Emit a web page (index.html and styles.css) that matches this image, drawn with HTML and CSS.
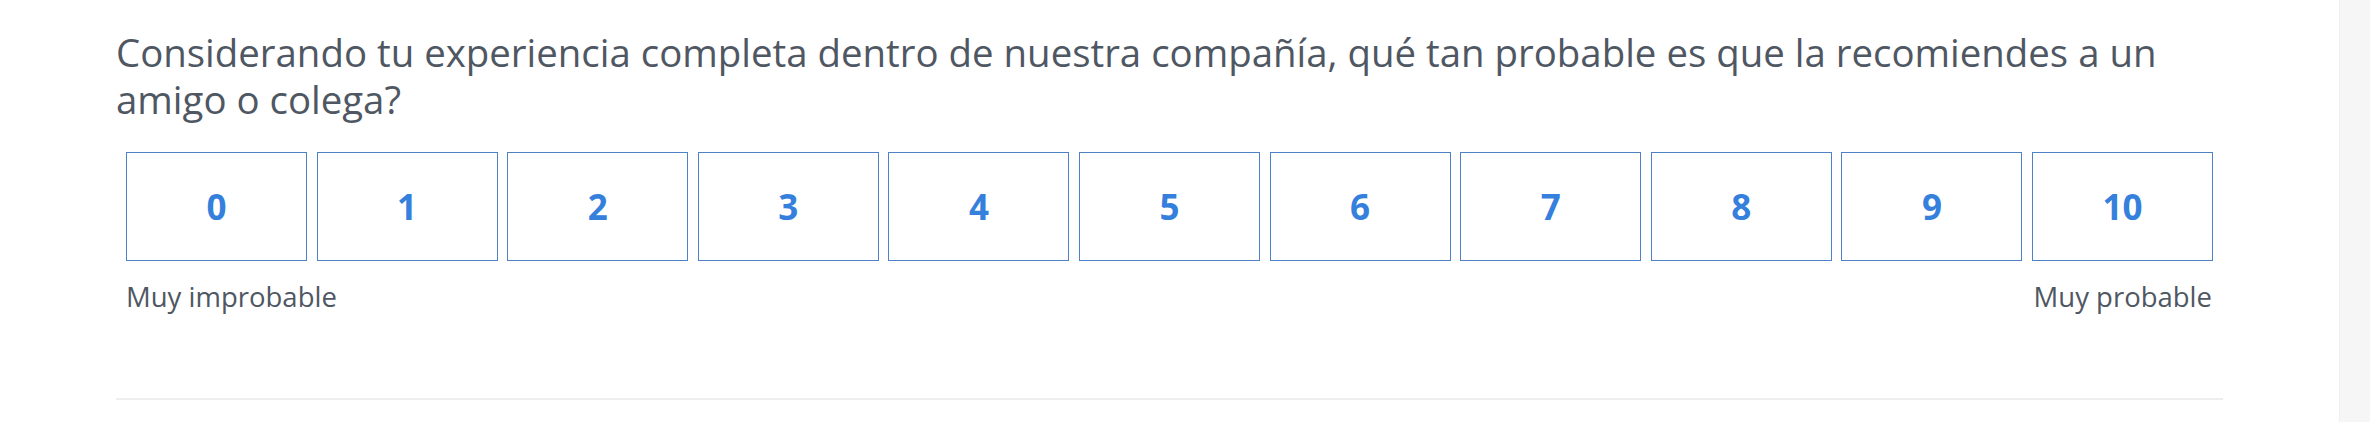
FILE: index.html
```html
<!DOCTYPE html>
<html lang="es">
<head>
    <meta charset="UTF-8">
    <meta name="viewport" content="width=device-width, initial-scale=1.0">
    <title>Encuesta NPS</title>
    <link rel="stylesheet" href="styles.css">
</head>
<body>
    <main class="survey">
        <section class="question">
            <h2 class="question-title">Considerando tu experiencia completa dentro de nuestra compañía, qué tan probable es que la recomiendes a un amigo o colega?</h2>
            <div class="scale">
                <button class="scale-option">0</button>
                <button class="scale-option">1</button>
                <button class="scale-option">2</button>
                <button class="scale-option">3</button>
                <button class="scale-option">4</button>
                <button class="scale-option">5</button>
                <button class="scale-option">6</button>
                <button class="scale-option">7</button>
                <button class="scale-option">8</button>
                <button class="scale-option">9</button>
                <button class="scale-option">10</button>
            </div>
            <div class="scale-labels">
                <span>Muy improbable</span>
                <span>Muy probable</span>
            </div>
        </section>
    </main>
    <div class="scroll-track"></div>
</body>
</html>
```

FILE: styles.css
```css
body {
    margin: 0;
    font-family: 'Open Sans', 'Lato', sans-serif;
    background-color: #ffffff;
    color: #4f5763;
    height: 100vh;
    display: flex;
    overflow: hidden;
}
.survey {
    flex: 1;
    padding: 0 116px;
}
.question {
    border-bottom: 2px solid #eeeeee;
    padding-bottom: 83px;
}
.question-title {
    margin: 0;
    padding-top: 29px;
    font-size: 38.4px;
    font-weight: normal;
    line-height: 47px;
}
.scale {
    display: grid;
    grid-template-columns: repeat(11, 1fr);
    gap: 9.6px;
    margin: 29px 10px 0;
}
.scale-option {
    height: 109px;
    background-color: #ffffff;
    border: 1px solid #4d83c6;
    color: #3580dc;
    font-family: inherit;
    font-size: 35px;
    font-weight: bold;
    cursor: pointer;
}
.scale-option:hover {
    background-color: #f2f7fd;
}
.scale-labels {
    display: flex;
    justify-content: space-between;
    margin: 17px 11px 0 10px;
    font-size: 27.5px;
}
.scroll-track {
    width: 30px;
    background-color: #f6f6f6;
    border-left: 1px solid #f0f0f0;
}
```
